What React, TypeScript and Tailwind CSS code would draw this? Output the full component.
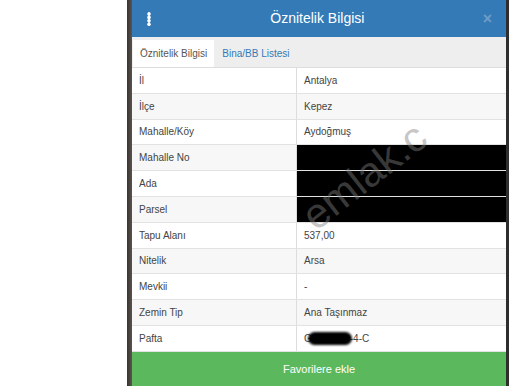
import React from 'react';

const rows: { label: string; value: string; hidden?: boolean; blur?: boolean }[] = [
    { label: 'İl', value: 'Antalya' },
    { label: 'İlçe', value: 'Kepez' },
    { label: 'Mahalle/Köy', value: 'Aydoğmuş' },
    { label: 'Mahalle No', value: '', hidden: true },
    { label: 'Ada', value: '', hidden: true },
    { label: 'Parsel', value: '', hidden: true },
    { label: 'Tapu Alanı', value: '537,00' },
    { label: 'Nitelik', value: 'Arsa' },
    { label: 'Mevkii', value: '-' },
    { label: 'Zemin Tip', value: 'Ana Taşınmaz' },
    { label: 'Pafta', value: '-4-C', blur: true },
];

export default function App() {
    return (
        <div className="flex h-[386px] w-[514px] overflow-hidden bg-white font-['Liberation_Sans',Arial,sans-serif]">
            <div className="w-[127px] shrink-0 bg-white" />
            <div className="w-[5px] shrink-0 bg-gradient-to-r from-[#3a3430] to-[#5a5350]" />

            <div className="relative flex w-[374px] shrink-0 flex-col overflow-hidden bg-white">
                {/* header */}
                <div className="flex h-[37px] shrink-0 items-center bg-[#337ab7] px-[14px]">
                    <svg width="6" height="14" viewBox="0 0 6 14" className="shrink-0">
                        <rect x="2.2" y="0" width="1.6" height="14" fill="#cfe0f0" />
                        <circle cx="3" cy="2" r="1.8" fill="#fff" />
                        <circle cx="3" cy="5.4" r="1.8" fill="#fff" />
                        <circle cx="3" cy="8.8" r="1.8" fill="#fff" />
                        <circle cx="3" cy="12.2" r="1.8" fill="#fff" />
                    </svg>
                    <div className="flex-1 text-center text-[14px] text-white">Öznitelik Bilgisi</div>
                    <span className="text-[16px] font-bold leading-none text-[#6f9cc8]">×</span>
                </div>

                {/* tabs */}
                <div className="flex h-[31px] shrink-0 items-end border-b border-[#ddd] bg-[#eeeeee] pl-px">
                    <div className="flex h-[27px] items-center bg-white px-[7px] text-[10px] text-[#555]">Öznitelik Bilgisi</div>
                    <div className="flex h-[27px] items-center px-[8px] text-[10px] text-[#337ab7]">Bina/BB Listesi</div>
                </div>

                {/* table */}
                <div className="flex flex-1 flex-col">
                    {rows.map((r, i) => (
                        <div
                            key={r.label}
                            className={`flex h-[25.8px] border-b border-[#e2e2e2] text-[10px] text-[#444] ${i % 2 === 1 ? 'bg-[#f7f7f7]' : 'bg-white'}`}
                        >
                            <div className="flex w-[165px] shrink-0 items-center border-r border-[#ddd] pl-[7px]">{r.label}</div>
                            {r.hidden ? (
                                <div className="flex-1 bg-black" />
                            ) : (
                                <div className="flex flex-1 items-center pl-[7px]">
                                    {r.blur && (
                                        <span className="mr-[-2px] inline-flex items-center">
                                            <span>G</span>
                                            <span className="ml-[-4px] h-[13px] w-[44px] rounded-full bg-black blur-[1px]" />
                                        </span>
                                    )}
                                    {r.value}
                                </div>
                            )}
                        </div>
                    ))}
                </div>

                {/* footer */}
                <div className="flex h-[34px] shrink-0 items-center justify-center bg-[#5cb85c] text-[11px] text-white">
                    Favorilere ekle
                </div>

                {/* watermark */}
                <div className="pointer-events-none absolute left-[232px] top-[176px] -translate-x-1/2 -translate-y-1/2 -rotate-[38deg] whitespace-nowrap text-[42px] text-[#808080]/45">
                    emlak.c
                </div>
            </div>

            <div className="w-[3px] shrink-0 bg-[#2e2e2e]" />
            <div className="flex-1 bg-white" />
        </div>
    );
}
